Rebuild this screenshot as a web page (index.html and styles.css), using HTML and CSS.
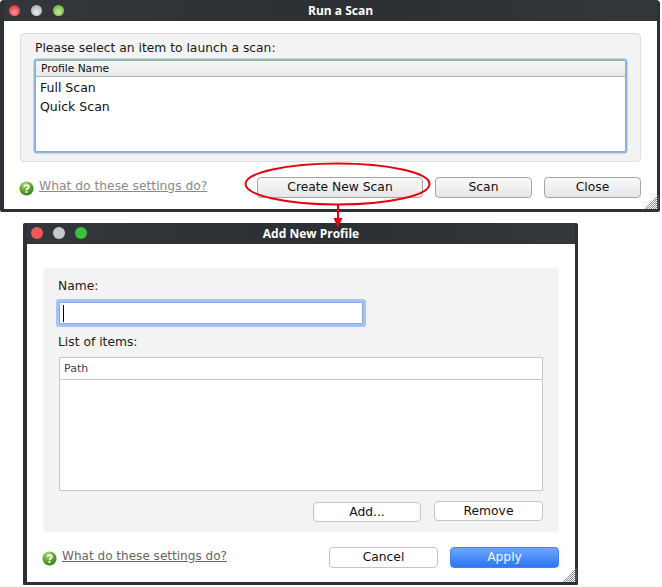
FILE: index.html
```html
<!DOCTYPE html>
<html lang="en">
<head>
<meta charset="utf-8">
<title>Run a Scan</title>
<link rel="stylesheet" href="styles.css">
</head>
<body>
<section class="window scan-window">
  <header class="titlebar">
    <div class="lights">
      <span class="light red-old"></span><span class="light gray-old"></span><span class="light green-old"></span>
    </div>
    <h1 class="title">Run a Scan</h1>
  </header>
  <div class="content">
    <div class="panel scan-panel">
      <p class="prompt">Please select an item to launch a scan:</p>
      <div class="listbox">
        <div class="list-head">Profile Name</div>
        <div class="list-row">Full Scan</div>
        <div class="list-row">Quick Scan</div>
      </div>
    </div>
    <div class="footer scan-footer">
      <a class="help faded">
        <svg class="help-icon" viewBox="0 0 16 16"><use href="#q"></use></svg>
        <span class="help-text">What do these settings do?</span>
      </a>
      <div class="actions scan-actions">
        <button class="btn old create">Create New Scan</button>
        <button class="btn old small">Scan</button>
        <button class="btn old small">Close</button>
      </div>
    </div>
    <svg class="grip" viewBox="0 0 14 14"><use href="#g"></use></svg>
  </div>
</section>

<section class="window profile-window">
  <header class="titlebar">
    <div class="lights">
      <span class="light red"></span><span class="light gray"></span><span class="light green"></span>
    </div>
    <h1 class="title">Add New Profile</h1>
  </header>
  <div class="content">
    <div class="panel profile-panel">
      <label class="field-label">Name:</label>
      <div class="name-input"><span class="caret"></span></div>
      <label class="field-label items-label">List of items:</label>
      <div class="table">
        <div class="table-head">Path</div>
      </div>
      <div class="table-actions">
        <button class="btn flat add">Add...</button>
        <button class="btn flat remove">Remove</button>
      </div>
    </div>
    <div class="footer profile-footer">
      <a class="help">
        <svg class="help-icon" viewBox="0 0 16 16"><use href="#q"></use></svg>
        <span class="help-text">What do these settings do?</span>
      </a>
      <div class="actions profile-actions">
        <button class="btn flat">Cancel</button>
        <button class="btn primary">Apply</button>
      </div>
    </div>
    <svg class="grip" viewBox="0 0 14 14"><use href="#g"></use></svg>
  </div>
</section>

<svg class="callout" viewBox="0 0 662 587">
  <ellipse cx="337.500" cy="184" rx="92" ry="20.500" fill="none" stroke="#e8000f" stroke-width="2"></ellipse>
  <path d="M338 205V219" stroke="#e8000f" stroke-width="2" fill="none"></path>
  <path d="M333.500 218H342.500L338 228Z" fill="#e8000f"></path>
</svg>

<svg class="defs" width="0" height="0">
  <defs>
    <radialGradient id="qg" cx="40%" cy="25%" r="80%">
      <stop offset="0" stop-color="#b5e07a"></stop>
      <stop offset=".55" stop-color="#5da52c"></stop>
      <stop offset="1" stop-color="#2f7a17"></stop>
    </radialGradient>
    <g id="q">
      <circle cx="8" cy="8" r="7.500" fill="url(#qg)"></circle>
      <path d="M5.800 6.200C5.900 3.800 10.400 3.700 10.400 6.300C10.400 8 8 8 8 9.800" fill="none" stroke="#fff" stroke-width="1.800"></path>
      <rect x="7" y="10.800" width="2" height="2" fill="#fff"></rect>
    </g>
    <g id="g" stroke="#777" stroke-width="0.800">
      <path d="M14 0L0 14M14 2L2 14M14 4L4 14M14 6L6 14M14 8L8 14M14 10L10 14M14 12L12 14"></path>
    </g>
  </defs>
</svg>
</body>
</html>
```
FILE: styles.css
```css
* { box-sizing: border-box; }
html, body { margin: 0; padding: 0; }
body {
  position: relative;
  width: 662px;
  height: 587px;
  overflow: hidden;
  background: #fff;
  font-family: "DejaVu Sans", sans-serif;
  color: #111;
}
.window {
  position: absolute;
  display: flex;
  flex-direction: column;
  background: #2d3034;
  border-radius: 4px 4px 2px 2px;
}
.scan-window { left: 0; top: 0; width: 660px; height: 212px; padding: 0 3px 3px 4px; }
.profile-window { left: 23px; top: 223px; width: 555px; height: 362px; padding: 0 3px 3px 4px; border-radius: 2px 2px 1px 1px; }
.titlebar {
  position: relative;
  flex: none;
  height: 21px;
  display: flex;
  align-items: center;
  justify-content: center;
  padding-left: 20px;
  background: linear-gradient(90deg, #33373b, #2c2f33 55%, #33373b);
}
.title {
  margin: 0;
  font: bold 12px/21px "Open Sans", sans-serif;
  color: #fff;
}
.lights {
  position: absolute;
  left: 5px;
  top: 5px;
  display: flex;
  gap: 11px;
}
.light { width: 11px; height: 11px; border-radius: 50%; }
.red-old { background: radial-gradient(circle at 50% 65%, #ff9a9a, #e33a40 70%); }
.gray-old { background: radial-gradient(circle at 50% 65%, #eee, #b5b5b5 70%); }
.green-old { background: radial-gradient(circle at 50% 65%, #c6eb9b, #76bb44 70%); }
.red { background: #f2575a; }
.gray { background: #c9c9c9; }
.green { background: #3ac33a; }
.profile-window .lights { left: 4px; top: 4px; gap: 10px; }
.profile-window .light { width: 12px; height: 12px; }
.content {
  position: relative;
  flex: 1;
  background: #fff;
  min-height: 0;
}
.panel {
  background: #f3f3f3;
  border-radius: 4px;
}
.scan-panel {
  margin: 12px 16px 0;
  height: 129px;
  border: 1px solid #ddd;
  padding: 7px 14px;
}
.prompt {
  margin: 0 0 4px;
  font-size: 12.300px;
  line-height: 15px;
  color: #1a1a1a;
}
.listbox {
  width: 591px;
  height: 92px;
  margin-top: 4px;
  background: #fff;
  border: 1px solid #a8a8a8;
  border-radius: 2px;
  box-shadow: 0 0 0 1.500px #8fb8e6;
}
.list-head {
  height: 16px;
  padding-left: 5px;
  font-size: 10.700px;
  line-height: 15px;
  background: linear-gradient(#f6f6f6, #e9e9e9);
  border-bottom: 1px solid #b0b0b0;
  margin-bottom: 1px;
}
.list-row {
  padding-left: 4px;
  height: 19px;
  font-size: 12.500px;
  line-height: 19px;
}
.footer { display: flex; align-items: center; justify-content: space-between; }
.scan-footer { margin: 14px 16px 0 15px; height: 22px; }
.help { display: flex; align-items: center; gap: 5px; }
.help-icon { width: 15px; height: 15px; flex: none; margin-top: 2px; }
.help-text {
  font-size: 12.300px;
  line-height: 16px;
  color: #666;
  text-decoration: underline;
  margin-top: -3px;
}
.profile-footer .help-text { font-size: 12.050px; }
.faded .help-text { color: #8a8a8a; }
.actions { display: flex; }
.scan-actions { gap: 12px; }
.btn {
  display: block;
  height: 21px;
  padding: 1px 0 0;
  font: 12.300px/17px "DejaVu Sans", sans-serif;
  color: #111;
  border-radius: 4px;
  text-align: center;
}
.old {
  background: linear-gradient(#fafafa, #e6e6e6);
  border: 1px solid #a5a5a5;
}
.create { width: 166px; }
.small { width: 97px; }
.flat { width: 109px; background: #fff; border: 1px solid #c4c4c4; }
.primary {
  width: 109px;
  color: #f1f6ff;
  border: 1px solid #3d84f5;
  background: linear-gradient(#6ba7fb, #2d76f2);
}
.profile-panel {
  margin: 24px 16px 0;
  height: 264px;
  padding: 10px 15px;
  display: flex;
  flex-direction: column;
}
.field-label { font-size: 12.300px; line-height: 16px; color: #222; }
.name-input {
  width: 304px;
  height: 22px;
  margin: 8px 0 0 1px;
  background: #fff;
  border: 1px solid #8aa8dc;
  box-shadow: 0 0 0 3px #a4c4f6;
  border-radius: 1px;
  padding: 2px 3px;
}
.caret { display: block; width: 1px; height: 17px; background: #000; }
.items-label { margin-top: 10px; }
.table {
  width: 484px;
  height: 135px;
  margin: 7px 0 0 1px;
  background: #fff;
  border: 1px solid #c8c8c8;
}
.table-head {
  height: 22px;
  padding-left: 4px;
  font-size: 11px;
  line-height: 21px;
  color: #444;
  border-bottom: 1px solid #c8c8c8;
}
.table-actions {
  display: flex;
  justify-content: flex-end;
  gap: 13px;
  margin: 10px 0 0;
  width: 485px;
}
.table-actions .btn { height: 20px; }
.add { margin-top: 1px; width: 108px; }
.remove { width: 109px; }
.profile-footer { margin: 14px 16px 0 15px; height: 22px; }
.profile-actions { gap: 12px; }
.grip { position: absolute; right: -2px; bottom: 0; width: 14px; height: 14px; }
.callout { position: absolute; left: 0; top: 0; width: 662px; height: 587px; pointer-events: none; }
.defs { position: absolute; }
```
